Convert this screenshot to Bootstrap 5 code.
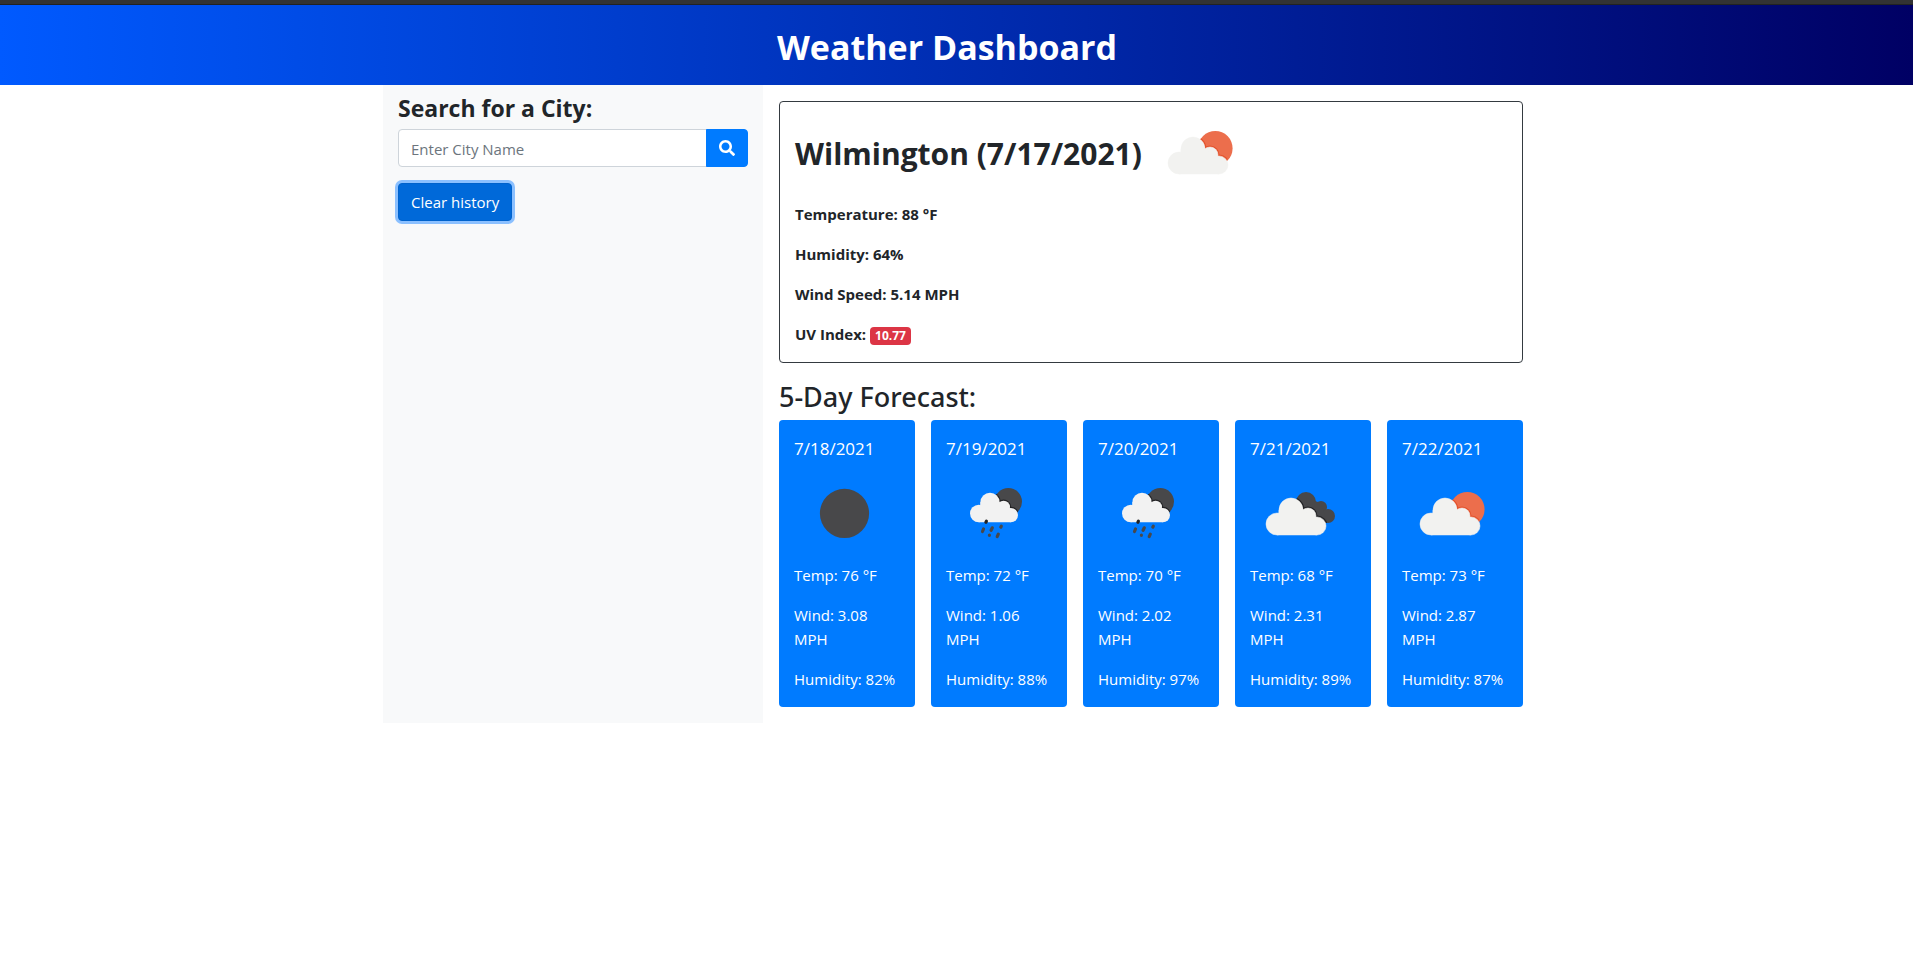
<!DOCTYPE html>
<html lang="en">
<head>
<meta charset="utf-8">
<meta name="viewport" content="width=device-width, initial-scale=1">
<title>Weather Dashboard</title>
<link href="https://cdn.jsdelivr.net/npm/bootstrap@5.3.0/dist/css/bootstrap.min.css" rel="stylesheet">
<style>
  body { font-family: "Open Sans", "Noto Sans", sans-serif; font-size: 15px; line-height: 24px; color: #212529; }
  .site-header { background: linear-gradient(to right, #005aff, #000064); border-top: 4px solid #333; box-shadow: inset 0 1px 0 #222; padding: 19px 0 14px; }
  .site-header h1 { font-size: 34px; line-height: 48px; }
  .dash { max-width: 1147px; }
  .search-side { background: #f8f9fa; padding: 8px 15px; }
  .search-side h2 { font-size: 23px; line-height: 30px; margin-bottom: 6px; }
  .form-control, .btn { font-size: 15px; line-height: 24px; }
  .form-control { border-color: #ced4da; border-radius: 4px; padding: 7px 12px 5px; }
  .form-control::placeholder { color: #6c757d; }
  .btn { border-radius: 4px; }
  .btn-search { --bs-btn-bg: #007bff; --bs-btn-border-color: #007bff; }
  .btn-clear { --bs-btn-bg: #0069d9; --bs-btn-border-color: #0062cc; box-shadow: 0 0 0 3px #8bc0ff; }
  .results { padding: 16px 7px 16px 16px; }
  .current { border: 1px solid #343a40; border-radius: 4px; padding: 0 15px; }
  .current h2 { font-size: 30px; line-height: 36px; padding-top: 3px; }
  .current .badge { font-size: 12px; line-height: 12px; padding: 3px 5px; border-radius: 4px; background: #dc3545; vertical-align: middle; }
  .wx { width: 100px; height: 100px; display: block; flex: none; }
  .forecast-title { font-family: "Noto Sans", "Open Sans", sans-serif; font-size: 27px; line-height: 35px; font-weight: 500; margin-bottom: 6px; }
  .day { background: #007bff; color: #fff; border: 0; border-radius: 4px; padding: 15px 15px 16px; }
  .day h3 { font-size: 17px; line-height: 28px; font-weight: 400; }
  @media (min-width: 992px) {
    .search-side { flex: 0 0 380px; }
    .results { flex: 1 1 0; min-width: 0; }
    .title-inset { padding-left: 394px; }
    .day { flex: 1 1 0; min-width: 0; }
  }
  @media (max-width: 991px) { .results { padding: 16px; } .day { flex: 1 1 136px; } .title-inset { padding-left: 16px; } }
</style>
</head>
<body>
<svg width="0" height="0" class="position-absolute" aria-hidden="true">
  <defs>
    <g id="cloud">
      <circle cx="29" cy="61" r="11"/><circle cx="43" cy="47" r="12"/><circle cx="60" cy="53" r="8"/><circle cx="69" cy="63" r="9"/>
      <path d="M31 47h24l14 8v17H29z"/>
    </g>
    <clipPath id="sunClip"><circle cx="65" cy="46" r="17"/></clipPath>
    <clipPath id="moonClip"><circle cx="62" cy="39" r="14"/></clipPath>
    <g id="backCloud">
      <circle cx="56" cy="39" r="10"/><circle cx="71" cy="44" r="6"/><circle cx="78" cy="53" r="7"/><path d="M56 35l15 5 6 20H60z"/>
    </g>
    <clipPath id="backClip"><circle cx="56" cy="39" r="10"/><circle cx="71" cy="44" r="6"/><circle cx="78" cy="53" r="7"/><path d="M56 35l15 5 6 20H60z"/></clipPath>
    <symbol id="few-clouds" viewBox="0 0 100 100">
      <circle cx="65.300" cy="46.300" r="17.300" fill="#ec6e4c"/>
      <g clip-path="url(#sunClip)"><use href="#cloud" fill="#e4532d" stroke="#e4532d" stroke-width="3"/></g>
      <use href="#cloud" fill="#f2f2f0" stroke="#f2f2f0" stroke-width=".5"/>
    </symbol>
    <symbol id="overcast" viewBox="0 0 100 100">
      <use href="#backCloud" fill="#48484a"/>
      <g clip-path="url(#backClip)"><use href="#cloud" x="-2" fill="#242426" stroke="#242426" stroke-width="3"/></g>
      <use href="#cloud" x="-2" fill="#f2f2f0" stroke="#f2f2f0" stroke-width=".5"/>
    </symbol>
    <symbol id="rain" viewBox="0 0 100 100">
      <circle cx="62.300" cy="38.700" r="13.700" fill="#48484a"/>
      <g clip-path="url(#moonClip)"><use href="#cloud" transform="translate(9.600 1.700) scale(.8)" fill="#242426" stroke="#242426" stroke-width="3"/></g>
      <use href="#cloud" transform="translate(9.600 1.700) scale(.8)" fill="#f2f2f2"/>
      <g stroke="#48484a" stroke-width="3.200" stroke-linecap="round">
        <path d="M40.400 58.200l-.5 1" stroke="#222"/>
        <path d="M37.500 66l-1 2.500M46.300 64.800l-1.200 2.500M55.300 63.200l-.5.900M43.400 72.200v.1M52.300 71.200l-1.100 2.400"/>
      </g>
    </symbol>
    <symbol id="clear-sky" viewBox="0 0 100 100"><circle cx="50.500" cy="50.400" r="24.600" fill="#48484a"/></symbol>
  </defs>
</svg>

<header class="site-header text-white">
  <div class="container-fluid dash px-0"><h1 class="title-inset fw-bold mb-0">Weather Dashboard</h1></div>
</header>

<main class="container-fluid dash px-0 d-lg-flex">
  <aside class="search-side">
    <h2 class="fw-bold"><label for="city">Search for a City:</label></h2>
    <form class="input-group mb-3">
      <input type="text" id="city" class="form-control" placeholder="Enter City Name">
      <button type="button" class="btn btn-primary btn-search" aria-label="Search">
        <svg width="16" height="16" viewBox="0 0 512 512" fill="currentColor" class="d-block" aria-hidden="true"><path d="M505 442.700L405.300 343c-4.500-4.500-10.600-7-17-7H372c27.600-35.300 44-79.700 44-128C416 93.100 322.900 0 208 0S0 93.100 0 208s93.100 208 208 208c48.300 0 92.700-16.400 128-44v16.300c0 6.400 2.500 12.500 7 17l99.700 99.700c9.400 9.400 24.600 9.400 33.900 0l28.300-28.300c9.400-9.400 9.400-24.600.1-34zM208 336c-70.700 0-128-57.200-128-128 0-70.700 57.200-128 128-128 70.700 0 128 57.200 128 128 0 70.700-57.200 128-128 128z"/></svg>
      </button>
    </form>
    <button type="button" class="btn btn-primary btn-clear">Clear history</button>
  </aside>

  <section class="results">
    <div class="current fw-bold mb-3">
      <div class="d-flex align-items-center gap-2">
        <h2 class="fw-bold mb-0">Wilmington (7/17/2021)</h2>
        <svg class="wx" role="img" aria-label="Few clouds"><use href="#few-clouds"/></svg>
      </div>
      <p>Temperature: 88 °F</p>
      <p>Humidity: 64%</p>
      <p>Wind Speed: 5.14 MPH</p>
      <p>UV Index: <span class="badge">10.77</span></p>
    </div>

    <h2 class="forecast-title">5-Day Forecast:</h2>
    <div class="d-flex flex-wrap flex-lg-nowrap gap-3">
      <article class="day">
        <h3 class="mb-0">7/18/2021</h3>
        <svg class="wx" role="img" aria-label="Clear"><use href="#clear-sky"/></svg>
        <p>Temp: 76 °F</p><p>Wind: 3.08 MPH</p><p class="mb-0">Humidity: 82%</p>
      </article>
      <article class="day">
        <h3 class="mb-0">7/19/2021</h3>
        <svg class="wx" role="img" aria-label="Rain"><use href="#rain"/></svg>
        <p>Temp: 72 °F</p><p>Wind: 1.06 MPH</p><p class="mb-0">Humidity: 88%</p>
      </article>
      <article class="day">
        <h3 class="mb-0">7/20/2021</h3>
        <svg class="wx" role="img" aria-label="Rain"><use href="#rain"/></svg>
        <p>Temp: 70 °F</p><p>Wind: 2.02 MPH</p><p class="mb-0">Humidity: 97%</p>
      </article>
      <article class="day">
        <h3 class="mb-0">7/21/2021</h3>
        <svg class="wx" role="img" aria-label="Overcast"><use href="#overcast"/></svg>
        <p>Temp: 68 °F</p><p>Wind: 2.31 MPH</p><p class="mb-0">Humidity: 89%</p>
      </article>
      <article class="day">
        <h3 class="mb-0">7/22/2021</h3>
        <svg class="wx" role="img" aria-label="Few clouds"><use href="#few-clouds"/></svg>
        <p>Temp: 73 °F</p><p>Wind: 2.87 MPH</p><p class="mb-0">Humidity: 87%</p>
      </article>
    </div>
  </section>
</main>
<script src="https://cdn.jsdelivr.net/npm/bootstrap@5.3.0/dist/js/bootstrap.bundle.min.js"></script>
</body>
</html>
